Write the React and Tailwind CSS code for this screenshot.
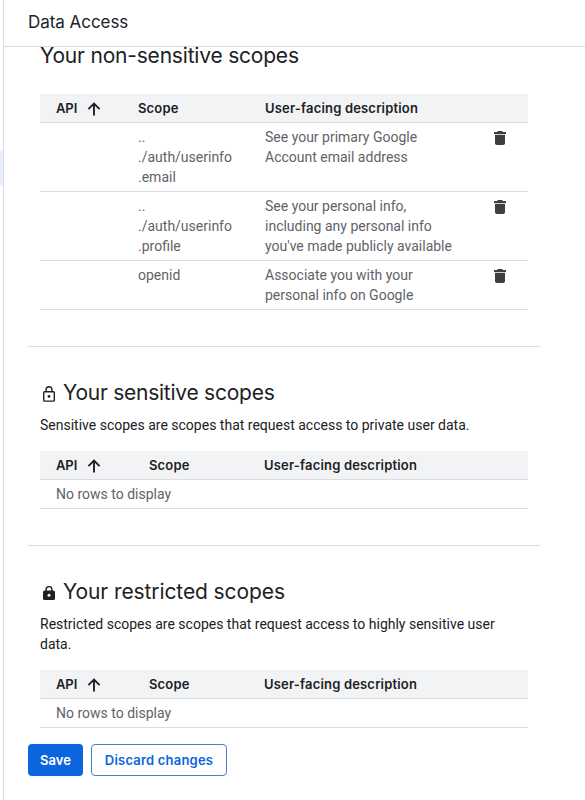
import React from "react";

const display = "font-['Inter','Liberation_Sans',sans-serif]";

function ArrowUp() {
  return (
    <svg className="mt-[2px] ml-[9px] h-4 w-4 shrink-0" viewBox="0 0 16 16" fill="none" stroke="#202124" strokeWidth="1.9">
      <path d="M8 14.5V2.5M2.4 8.1 8 2.5l5.6 5.6" />
    </svg>
  );
}

function Trash() {
  return (
    <svg className="mt-[4px] h-[14px] w-3" viewBox="0 0 12 14" fill="#3c4043">
      <path d="M4 0h4l1 1h3v2H0V1h3zM1 3.8h10v8.4a1.8 1.8 0 0 1-1.8 1.8H2.8A1.8 1.8 0 0 1 1 12.2z" />
    </svg>
  );
}

function LockOutline() {
  return (
    <svg className="mt-[7px] mr-[8px] ml-[3px] h-4 w-3 shrink-0" viewBox="0 0 12 16" fill="none" stroke="#202124" strokeWidth="1.4">
      <rect x="0.7" y="5.7" width="10.6" height="9.4" rx="0.8" />
      <path d="M3.1 5.5V3.6a2.9 2.9 0 0 1 5.8 0v1.9" />
      <circle cx="6" cy="10.4" r="1.4" fill="#202124" stroke="none" />
    </svg>
  );
}

function LockFilled() {
  return (
    <svg className="mt-[8px] mr-[8px] ml-[3px] h-[14px] w-3 shrink-0" viewBox="0 0 12 14">
      <path d="M3.1 5V3.5a2.9 2.9 0 0 1 5.8 0V5" fill="none" stroke="#202124" strokeWidth="1.4" />
      <rect y="4.6" width="12" height="9.4" rx="1.6" fill="#202124" />
      <circle cx="6" cy="9.3" r="1.5" fill="#fff" />
    </svg>
  );
}

function TableHead({ cols }) {
  return (
    <div className={`${display} grid ${cols} h-[29px] items-center border-b border-[#dadce0] bg-[#f1f3f4] pl-4 text-[13px] leading-5 font-semibold text-[#202124]`}>
      <div className="flex items-center">
        <span className="tracking-[-0.1px]">API</span>
        <ArrowUp />
      </div>
      <span className="tracking-[0.15px]">Scope</span>
      <span className="tracking-[0.18px] whitespace-nowrap">User-facing description</span>
    </div>
  );
}

const rows = [
  { scope: ["..", "./auth/userinfo", ".email"], text: ["See your primary Google", "Account email address"] },
  { scope: ["..", "./auth/userinfo", ".profile"], text: ["See your personal info,", "including any personal info", "you've made publicly available"] },
  { scope: ["openid"], text: ["Associate you with your", "personal info on Google"] },
];

function Lines({ items }) {
  return (
    <div className="whitespace-nowrap">
      {items.map((t) => (
        <div key={t}>{t}</div>
      ))}
    </div>
  );
}

function EmptyTable() {
  return (
    <div className="mt-4 w-[488px]">
      <TableHead cols="grid-cols-[93px_115px_1fr]" />
      <div className="h-[29px] border-b border-[#dadce0] py-1 pl-4 text-[#5f6368]">No rows to display</div>
    </div>
  );
}

export default function App() {
  return (
    <div className="flex h-[800px] w-[585px] overflow-hidden bg-white font-['Roboto','Liberation_Sans',sans-serif] text-sm leading-5 text-[#202124]">
      <div className="w-1 shrink-0 border-r border-[#dadce0] pt-[150px]">
        <div className="h-9 bg-[#e8f0fe]" />
      </div>
      <main className="flex min-w-0 flex-1 flex-col">
        <header className="flex h-[47px] shrink-0 items-center border-b border-[#dadce0] pb-[3px] pl-6">
          <h1 className={`${display} text-[17px] leading-6 tracking-[-0.05px]`}>Data Access</h1>
        </header>
        <div className="flex-1 pl-6">
          <section className="h-[299px] w-[512px] pl-3">
            <h2 className={`${display} pb-[29px] text-[21px] leading-[18px] tracking-[-0.2px] whitespace-nowrap`}>Your non-sensitive scopes</h2>
            <div className="w-[488px]">
              <TableHead cols="grid-cols-[82px_127px_1fr]" />
              {rows.map((r) => (
                <div key={r.text[0]} className="grid grid-cols-[82px_127px_229px_1fr] border-b border-[#dadce0] py-1 pl-4 text-[#5f6368]">
                  <span />
                  <Lines items={r.scope} />
                  <Lines items={r.text} />
                  <Trash />
                </div>
              ))}
            </div>
          </section>
          <section className="h-[199px] w-[512px] border-t border-[#dadce0] pt-8 pl-3">
            <div className="flex h-7">
              <LockOutline />
              <h2 className={`${display} text-[21px] leading-7 tracking-[-0.25px] whitespace-nowrap`}>Your sensitive scopes</h2>
            </div>
            <p className="mt-2">Sensitive scopes are scopes that request access to private user data.</p>
            <EmptyTable />
          </section>
          <section className="w-[512px] border-t border-[#dadce0] pt-8 pl-3">
            <div className="flex h-7">
              <LockFilled />
              <h2 className={`${display} text-[21px] leading-7 tracking-[-0.1px] whitespace-nowrap`}>Your restricted scopes</h2>
            </div>
            <p className="mt-2 w-[488px]">Restricted scopes are scopes that request access to highly sensitive user data.</p>
            <EmptyTable />
          </section>
          <div className={`${display} mt-4 flex gap-2 text-[13px] font-semibold`}>
            <button className="h-8 w-[55px] rounded bg-[#0b65dd] text-white">Save</button>
            <button className="h-8 w-[136px] rounded border border-[#4a7fd0] tracking-[0.2px] text-[#0b65dd] whitespace-nowrap">Discard changes</button>
          </div>
        </div>
      </main>
    </div>
  );
}
